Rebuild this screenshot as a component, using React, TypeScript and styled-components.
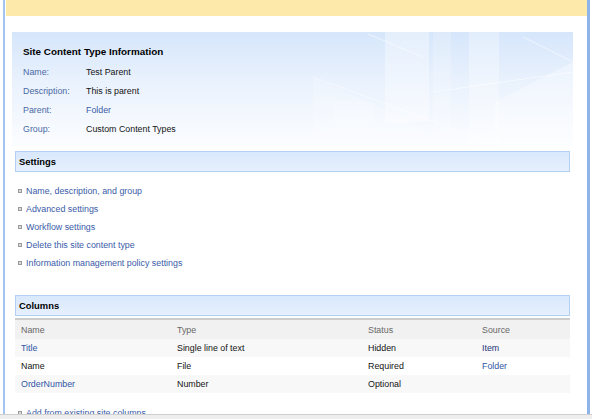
import React from "react";
import styled, { createGlobalStyle } from "styled-components";

const Global = createGlobalStyle`
  html, body { margin: 0; padding: 0; background: #ffffff; }
  body {
    font-family: "Liberation Sans", Arial, sans-serif;
    font-size: 8.85px;
    color: #141414;
  }
  #root { width: 592px; height: 419px; }
`;

const Window = styled.div`
  width: 592px;
  height: 419px;
  overflow: hidden;
  display: flex;
  flex-direction: column;
  background: #ffffff;
`;

const Viewport = styled.div`
  flex: 1;
  min-height: 0;
  display: flex;
  padding: 0 2px 0 3px;
  overflow: hidden;
`;

const Frame = styled.div`
  flex: 1;
  display: flex;
  flex-direction: column;
  border-left: 2px solid #a3c3f0;
  border-right: 3px solid #8db3ea;
  overflow: hidden;
`;

const StatusBar = styled.div`
  height: 4px;
  background: #eeeeee;
  border-top: 1px solid #cfcfcf;
`;

const Banner = styled.div`
  height: 16px;
  margin-left: 1px;
  flex-shrink: 0;
  background: #fde9aa;
`;

const Content = styled.div`
  display: flex;
  flex-direction: column;
  padding: 0 17px 0 10px;
`;

const InfoPanel = styled.section`
  position: relative;
  margin: 16px -3px 0 -3px;
  height: 115px;
  box-sizing: border-box;
  padding: 13px 11px 0 11px;
  background: linear-gradient(to bottom, #d6e6fb 0%, #eaf2fd 45%, #fcfdff 100%);
  overflow: hidden;
`;

const Skyline = styled.svg`
  position: absolute;
  right: 0;
  top: 0;
  width: 300px;
  height: 115px;
  pointer-events: none;
`;

const PanelTitle = styled.h2`
  position: relative;
  margin: 0;
  font-size: 9.9px;
  font-weight: bold;
  line-height: 14px;
  color: #000000;
`;

const InfoGrid = styled.dl`
  position: relative;
  margin: 3.5px 0 0 0;
  display: grid;
  grid-template-columns: 63px 1fr;
  grid-auto-rows: 19px;
  align-items: center;
`;

const Label = styled.dt`
  margin: 0;
  color: #4a6aa4;
`;

const Value = styled.dd<{ $link?: boolean }>`
  margin: 0;
  color: ${(p) => (p.$link ? "#3a5ca8" : "#141414")};
`;

const SectionHeader = styled.h3<{ $top: number }>`
  margin: ${(p) => p.$top}px 0 0 0;
  height: 21px;
  box-sizing: border-box;
  display: flex;
  align-items: center;
  padding-left: 3px;
  border: 1px solid #b4cff4;
  background: linear-gradient(to bottom, #d9e8fc, #e6f0fd);
  font-size: 9.4px;
  font-weight: bold;
  color: #000000;
`;

const LinkList = styled.ul<{ $top: number }>`
  list-style: none;
  margin: ${(p) => p.$top}px 0 0 0;
  padding: 0 0 0 3px;
  display: flex;
  flex-direction: column;
`;

const LinkItem = styled.li`
  display: flex;
  align-items: center;
  gap: 4px;
  height: 18px;
  color: #3a5ca8;
`;

const Bullet = styled.span`
  width: 4px;
  height: 4px;
  box-sizing: border-box;
  border: 1px solid #9a9a9a;
  background: #dcdcdc;
  flex-shrink: 0;
`;

const Table = styled.table`
  margin-top: 2px;
  width: 100%;
  border-collapse: collapse;
  table-layout: fixed;
`;

const HeadCell = styled.th<{ $w?: number }>`
  width: ${(p) => (p.$w ? `${p.$w}px` : "auto")};
  height: 20px;
  padding: 0 0 0 6px;
  text-align: left;
  font-weight: normal;
  color: #686868;
  background: #f1f1f1;
  border-top: 2px solid #cdcdcd;
  box-sizing: border-box;
`;

const Row = styled.tr<{ $alt?: boolean }>`
  background: ${(p) => (p.$alt ? "#f8f8f8" : "#ffffff")};
`;

const Cell = styled.td<{ $tone?: "link" | "visited" }>`
  height: 18px;
  padding: 0 0 0 6px;
  color: ${(p) =>
    p.$tone === "link" ? "#2f55a4" : p.$tone === "visited" ? "#1f357c" : "#141414"};
`;

const info = [
  { label: "Name:", value: "Test Parent" },
  { label: "Description:", value: "This is parent" },
  { label: "Parent:", value: "Folder", link: true },
  { label: "Group:", value: "Custom Content Types" },
];

const settings = [
  "Name, description, and group",
  "Advanced settings",
  "Workflow settings",
  "Delete this site content type",
  "Information management policy settings",
];

type Col = {
  name: string;
  nameLink: boolean;
  type: string;
  status: string;
  source: string;
  sourceTone?: "link" | "visited";
};

const columns: Col[] = [
  { name: "Title", nameLink: true, type: "Single line of text", status: "Hidden", source: "Item", sourceTone: "visited" },
  { name: "Name", nameLink: false, type: "File", status: "Required", source: "Folder", sourceTone: "link" },
  { name: "OrderNumber", nameLink: true, type: "Number", status: "Optional", source: "" },
];

export default function App() {
  return (
    <Window>
      <Global />
      <Viewport>
        <Frame>
          <Banner />
          <Content>
            <InfoPanel>
              <Skyline viewBox="0 0 300 115" aria-hidden="true">
                <g fill="#ffffff">
                  <polygon points="40,45 150,95 150,115 40,115" opacity="0.2" />
                  <rect x="112" y="0" width="44" height="90" opacity="0.35" />
                  <rect x="160" y="0" width="18" height="110" opacity="0.2" />
                  <rect x="196" y="0" width="30" height="115" opacity="0.3" />
                  <polygon points="222,70 300,30 300,115 222,115" opacity="0.35" />
                  <rect x="60" y="70" width="40" height="45" opacity="0.2" />
                </g>
                <g stroke="#ffffff" strokeWidth="1" opacity="0.55">
                  <line x1="40" y1="45" x2="230" y2="115" />
                  <line x1="95" y1="2" x2="150" y2="25" />
                  <line x1="250" y1="5" x2="300" y2="30" />
                  <line x1="160" y1="60" x2="300" y2="40" />
                </g>
              </Skyline>
              <PanelTitle>Site Content Type Information</PanelTitle>
              <InfoGrid>
                {info.map((r) => (
                  <React.Fragment key={r.label}>
                    <Label>{r.label}</Label>
                    <Value $link={r.link}>{r.value}</Value>
                  </React.Fragment>
                ))}
              </InfoGrid>
            </InfoPanel>

            <SectionHeader $top={4}>Settings</SectionHeader>
            <LinkList $top={10}>
              {settings.map((s) => (
                <LinkItem key={s}>
                  <Bullet />
                  {s}
                </LinkItem>
              ))}
            </LinkList>

            <SectionHeader $top={23}>Columns</SectionHeader>
            <Table>
              <thead>
                <tr>
                  <HeadCell $w={156}>Name</HeadCell>
                  <HeadCell $w={191}>Type</HeadCell>
                  <HeadCell $w={114}>Status</HeadCell>
                  <HeadCell>Source</HeadCell>
                </tr>
              </thead>
              <tbody>
                {columns.map((c, i) => (
                  <Row key={c.name} $alt={i % 2 === 0}>
                    <Cell $tone={c.nameLink ? "link" : undefined}>{c.name}</Cell>
                    <Cell>{c.type}</Cell>
                    <Cell>{c.status}</Cell>
                    <Cell $tone={c.sourceTone}>{c.source}</Cell>
                  </Row>
                ))}
              </tbody>
            </Table>
            <LinkList $top={11}>
              <LinkItem>
                <Bullet />
                Add from existing site columns
              </LinkItem>
            </LinkList>
          </Content>
        </Frame>
      </Viewport>
      <StatusBar />
    </Window>
  );
}
